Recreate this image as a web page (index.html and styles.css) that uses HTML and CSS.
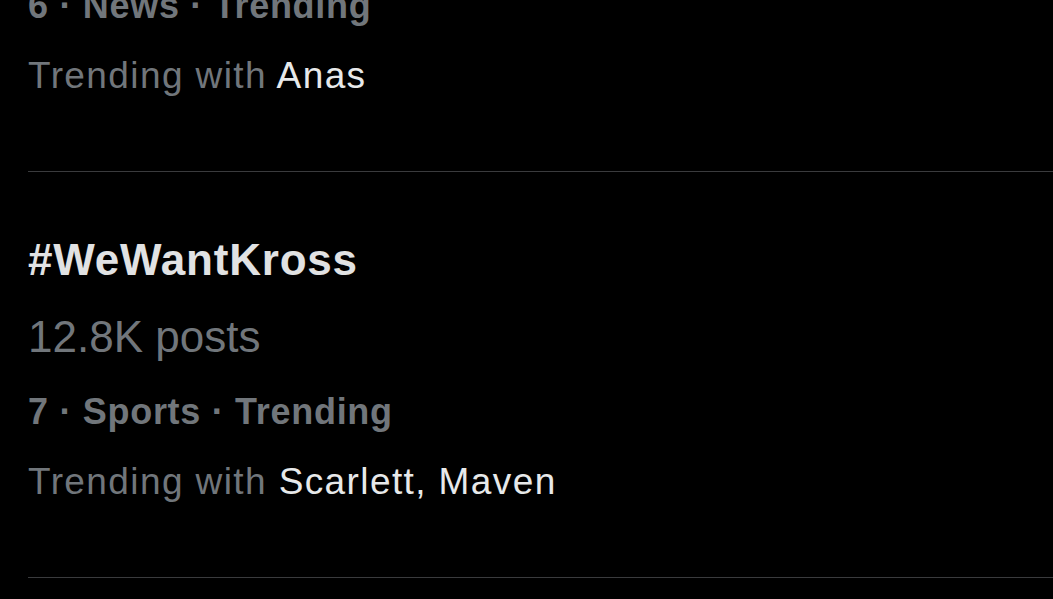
FILE: index.html
```html
<!DOCTYPE html>
<html lang="en">
<head>
<meta charset="utf-8">
<title>Trends</title>
<link rel="stylesheet" href="styles.css">
</head>
<body>
<main class="trends">
  <section class="trend trend-first">
    <div class="meta">6 · News · Trending</div>
    <div class="with">Trending with <span class="names">Anas</span></div>
  </section>
  <section class="trend">
    <div class="title">#WeWantKross</div>
    <div class="count">12.8K posts</div>
    <div class="meta">7 · Sports · Trending</div>
    <div class="with">Trending with <span class="names">Scarlett, Maven</span></div>
  </section>
</main>
</body>
</html>
```

FILE: styles.css
```css
html, body {
  margin: 0;
  padding: 0;
  background: #000;
  height: 100%;
  overflow: hidden;
}

body {
  font-family: "Liberation Sans", Arial, sans-serif;
  color: #71767b;
}

.trends {
  padding-left: 28px;
  margin-top: -29px;
}

.trend {
  padding: 51px 0 60px;
  border-bottom: 1px solid #3a3b3d;
}

.trend-first {
  padding-top: 0;
}

.meta {
  font-size: 36px;
  font-weight: 700;
  line-height: 70px;
  letter-spacing: 0.7px;
  color: #71767b;
}

.with {
  font-size: 37px;
  line-height: 70px;
  letter-spacing: 1.4px;
  color: #71767b;
}

.names {
  color: #e7e9ea;
}

.title {
  font-size: 44px;
  font-weight: 700;
  line-height: 74px;
  letter-spacing: 0.8px;
  color: #e1e2e3;
}

.count {
  font-size: 44px;
  line-height: 80px;
  color: #71767b;
}
```
